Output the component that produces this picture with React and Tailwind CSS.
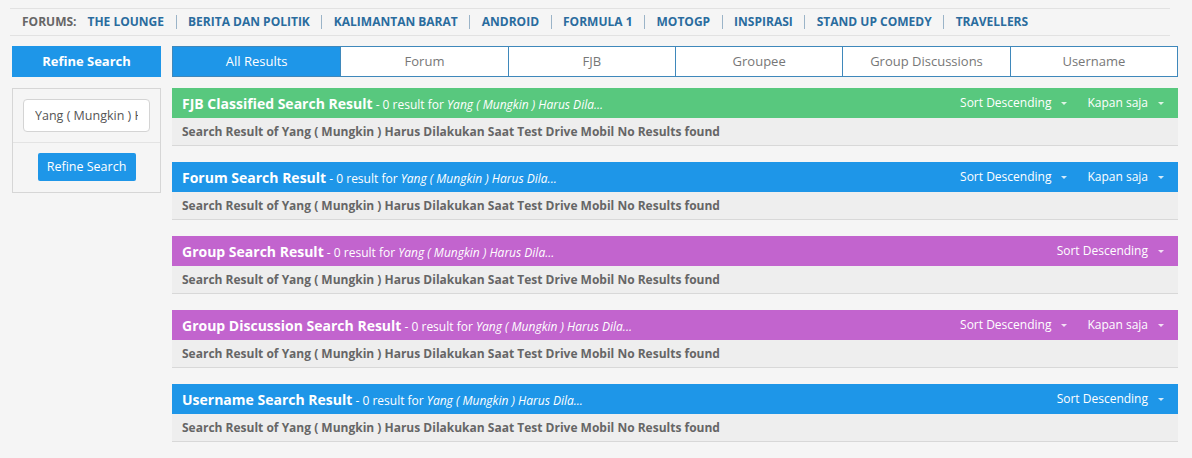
import React from "react";

const forums = [
  "The Lounge",
  "Berita dan Politik",
  "Kalimantan Barat",
  "Android",
  "Formula 1",
  "MotoGP",
  "Inspirasi",
  "Stand Up Comedy",
  "Travellers",
];

const tabs = ["All Results", "Forum", "FJB", "Groupee", "Group Discussions", "Username"];

const query = "Yang ( Mungkin ) Harus Dila...";
const fullQuery = "Yang ( Mungkin ) Harus Dilakukan Saat Test Drive Mobil";

const results = [
  { title: "FJB Classified Search Result", color: "bg-[#58c87e]", time: true },
  { title: "Forum Search Result", color: "bg-[#1e96e8]", time: true },
  { title: "Group Search Result", color: "bg-[#c264ce]", time: false },
  { title: "Group Discussion Search Result", color: "bg-[#c264ce]", time: true },
  { title: "Username Search Result", color: "bg-[#1e96e8]", time: false },
];

const Caret = () => (
  <span className="ml-[10px] inline-block w-0 h-0 border-l-[3px] border-r-[3px] border-t-[3px] border-l-transparent border-r-transparent border-t-white/80" />
);

const Dropdown = ({ label }) => (
  <span className="flex items-center text-[12px] text-white ml-[20px]">
    {label}
    <Caret />
  </span>
);

export default function App() {
  return (
    <div className="min-h-[458px] bg-[#f5f5f5] font-['Open_Sans',sans-serif] pt-[8px]">
      {/* forum nav */}
      <div className="mx-[10px] w-[1160px] h-[28px] border-t border-b border-[#e2e2e2] flex items-center pl-[12px] text-[12px] font-bold uppercase">
        <span className="text-[#666] mr-[11px]">Forums:</span>
        {forums.map((f, i) => (
          <span
            key={f}
            className={
              "text-[#2a6c9e] px-[11.5px] leading-[14px] " +
              (i === 0 ? "pl-0" : "border-l border-[#9bb4c8]")
            }
          >
            {f}
          </span>
        ))}
      </div>

      <div className="flex gap-[11px] pl-[12px] pr-[14px] mt-[10px]">
        {/* sidebar */}
        <div className="w-[149px] shrink-0">
          <div className="h-[31px] bg-[#1e96e8] text-white text-[13px] font-bold flex items-center justify-center">
            Refine Search
          </div>
          <div className="mt-[11px] border border-[#d6d6d6]">
            <div className="px-[10px] pt-[10px] pb-[10px] border-b border-[#e3e3e3]">
              <input
                readOnly
                value="Yang ( Mungkin ) Harus Dilakukan Saat Test Drive Mobil"
                className="w-full h-[33px] bg-white border border-[#d4d4d4] rounded-[4px] px-[11px] text-[12.5px] text-[#555] outline-none"
              />
            </div>
            <div className="flex justify-center pt-[10px] pb-[11px]">
              <button className="w-[98px] h-[28px] bg-[#1e96e8] text-white text-[12.5px] rounded-[2px]">
                Refine Search
              </button>
            </div>
          </div>
        </div>

        {/* main */}
        <div className="flex-1">
          <div className="grid grid-cols-6 h-[31px] border border-[#3f88bb] bg-white">
            {tabs.map((t, i) => (
              <div
                key={t}
                className={
                  "flex items-center justify-center text-[13px] " +
                  (i === 0 ? "bg-[#1e96e8] text-white" : "text-[#777] border-l border-[#3f88bb]")
                }
              >
                {t}
              </div>
            ))}
          </div>

          <div className="mt-[11px] flex flex-col gap-[16px]">
            {results.map((r) => (
              <div key={r.title}>
                <div className={"h-[30px] flex items-center justify-between pl-[10px] pr-[14px] " + r.color}>
                  <div className="text-white whitespace-nowrap">
                    <span className="text-[14px] font-bold">{r.title}</span>
                    <span className="text-[12px]"> - 0 result for </span>
                    <span className="text-[12px] italic">{query}</span>
                  </div>
                  <div className="flex items-center">
                    <Dropdown label="Sort Descending" />
                    {r.time && <Dropdown label="Kapan saja" />}
                  </div>
                </div>
                <div className="h-[28px] bg-[#eeeeee] border-b border-[#d8d8d8] flex items-center pl-[10px] text-[12px] font-bold text-[#666]">
                  Search Result of {fullQuery} No Results found
                </div>
              </div>
            ))}
          </div>
        </div>
      </div>
    </div>
  );
}
